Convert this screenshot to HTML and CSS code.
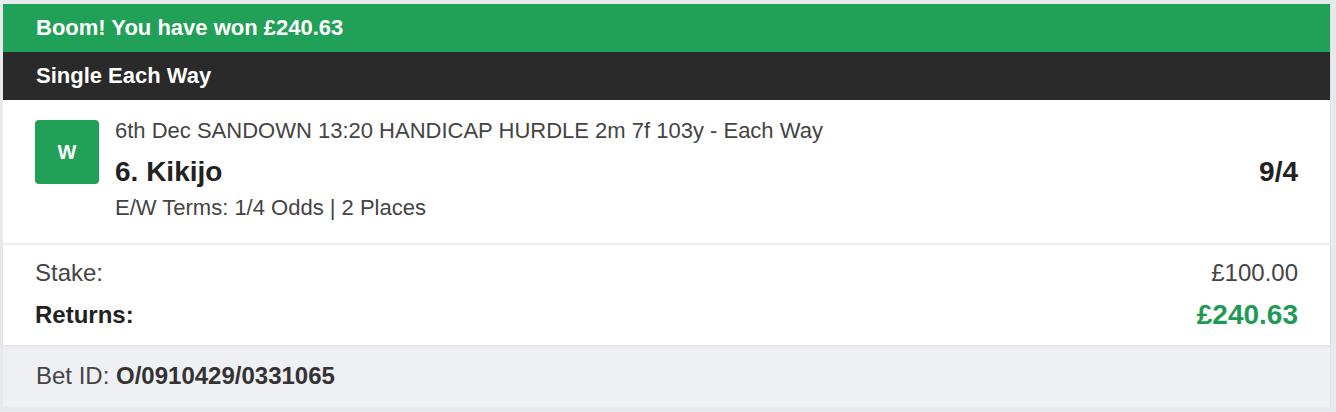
FILE: index.html
```html
<!DOCTYPE html>
<html>
<head>
<meta charset="utf-8">
<link rel="stylesheet" href="styles.css">
</head>
<body>
<div class="card">
  <div class="banner">Boom! You have won £240.63</div>
  <div class="type">Single Each Way</div>
  <div class="selection">
    <div class="badge">W</div>
    <div class="sel-info">
      <div class="event">6th Dec SANDOWN 13:20 HANDICAP HURDLE 2m 7f 103y - Each Way</div>
      <div class="runner-row">
        <span class="runner">6. Kikijo</span>
        <span class="odds">9/4</span>
      </div>
      <div class="terms">E/W Terms: 1/4 Odds | 2 Places</div>
    </div>
  </div>
  <div class="totals">
    <div class="row"><span>Stake:</span><span>£100.00</span></div>
    <div class="row strong"><span>Returns:</span><span class="win">£240.63</span></div>
  </div>
  <div class="footer">Bet ID: <b>O/0910429/0331065</b></div>
</div>
</body>
</html>
```
FILE: styles.css
```css
html, body {
  margin: 0;
  padding: 0;
  background: #e7e9ec;
  font-family: "Liberation Sans", Arial, sans-serif;
}
body {
  padding: 4px 5px 5px 3px;
}
.card {
  background: #fff;
  border-right: 1px solid #dfe1e4;
}
.banner {
  height: 48px;
  background: #21a057;
  color: #fff;
  font-weight: bold;
  font-size: 22px;
  display: flex;
  align-items: center;
  padding-left: 33px;
}
.type {
  height: 48px;
  background: #2a2a2a;
  color: #fff;
  font-weight: bold;
  font-size: 22px;
  display: flex;
  align-items: center;
  padding-left: 33px;
}
.selection {
  display: flex;
  box-sizing: border-box;
  padding: 20px 32px 0 32px;
  border-bottom: 2px solid #eceef1;
  height: 145px;
}
.badge {
  width: 64px;
  height: 64px;
  flex: none;
  background: #21a057;
  border-radius: 4px;
  color: #fff;
  font-weight: bold;
  font-size: 20px;
  display: flex;
  align-items: center;
  justify-content: center;
  margin-right: 16px;
}
.sel-info {
  flex: 1;
  color: #444;
}
.event {
  font-size: 22px;
  line-height: 22px;
}
.runner-row {
  display: flex;
  justify-content: space-between;
  align-items: center;
  margin-top: 15px;
  height: 30px;
  color: #222;
  font-weight: bold;
  font-size: 28px;
}
.terms {
  font-size: 22px;
  line-height: 22px;
  margin-top: 10px;
}
.totals {
  height: 100px;
  box-sizing: border-box;
  padding: 17px 32px 0 32px;
  box-shadow: 0 1px 2px rgba(0,0,0,0.06);
  position: relative;
}
.row {
  display: flex;
  justify-content: space-between;
  align-items: center;
  font-size: 24px;
  color: #444;
  height: 22px;
}
.row.strong {
  font-weight: bold;
  color: #222;
  margin-top: 20px;
}
.win {
  color: #1f9a55;
  font-size: 28px;
}
.footer {
  height: 62px;
  background: #eef0f3;
  display: flex;
  align-items: center;
  padding-left: 33px;
  font-size: 24px;
  color: #444;
  white-space: pre;
}
.footer b {
  color: #333;
}
```
